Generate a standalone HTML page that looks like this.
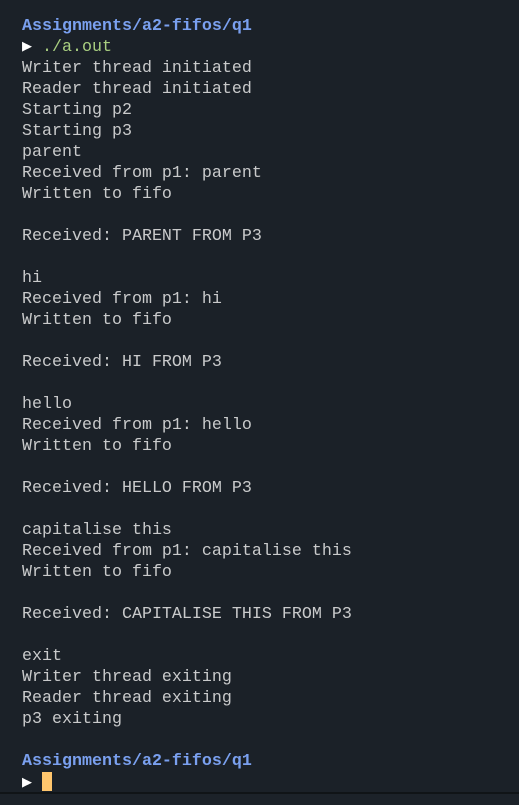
<!DOCTYPE html>
<html><head><style>
html,body{margin:0;padding:0;}
body{width:519px;height:805px;background:#1b2128;overflow:hidden;position:relative;}
pre{margin:0;position:absolute;left:22px;top:16px;font-family:"Liberation Mono",monospace;font-size:16.67px;line-height:21px;color:#c9cacb;}
.b{color:#7aa0ef;font-weight:bold;}
.g{color:#a9cf80;}
.w{color:#fff;}
.cur{display:inline-block;width:10px;height:19px;background:#ffc66d;vertical-align:-4px;}
.bar{position:absolute;left:0;top:792px;width:519px;height:2px;background:#101417;}
.bot{position:absolute;left:0;top:794px;width:519px;height:11px;background:#1c2229;}
</style></head><body>
<pre><span class="b">Assignments/a2-fifos/q1</span>
<span class="w">▶</span> <span class="g">./a.out</span>
Writer thread initiated
Reader thread initiated
Starting p2
Starting p3
parent
Received from p1: parent
Written to fifo

Received: PARENT FROM P3

hi
Received from p1: hi
Written to fifo

Received: HI FROM P3

hello
Received from p1: hello
Written to fifo

Received: HELLO FROM P3

capitalise this
Received from p1: capitalise this
Written to fifo

Received: CAPITALISE THIS FROM P3

exit
Writer thread exiting
Reader thread exiting
p3 exiting

<span class="b">Assignments/a2-fifos/q1</span>
<span class="w">▶</span> <span class="cur"></span></pre>
<div class="bar"></div><div class="bot"></div>
</body></html>
